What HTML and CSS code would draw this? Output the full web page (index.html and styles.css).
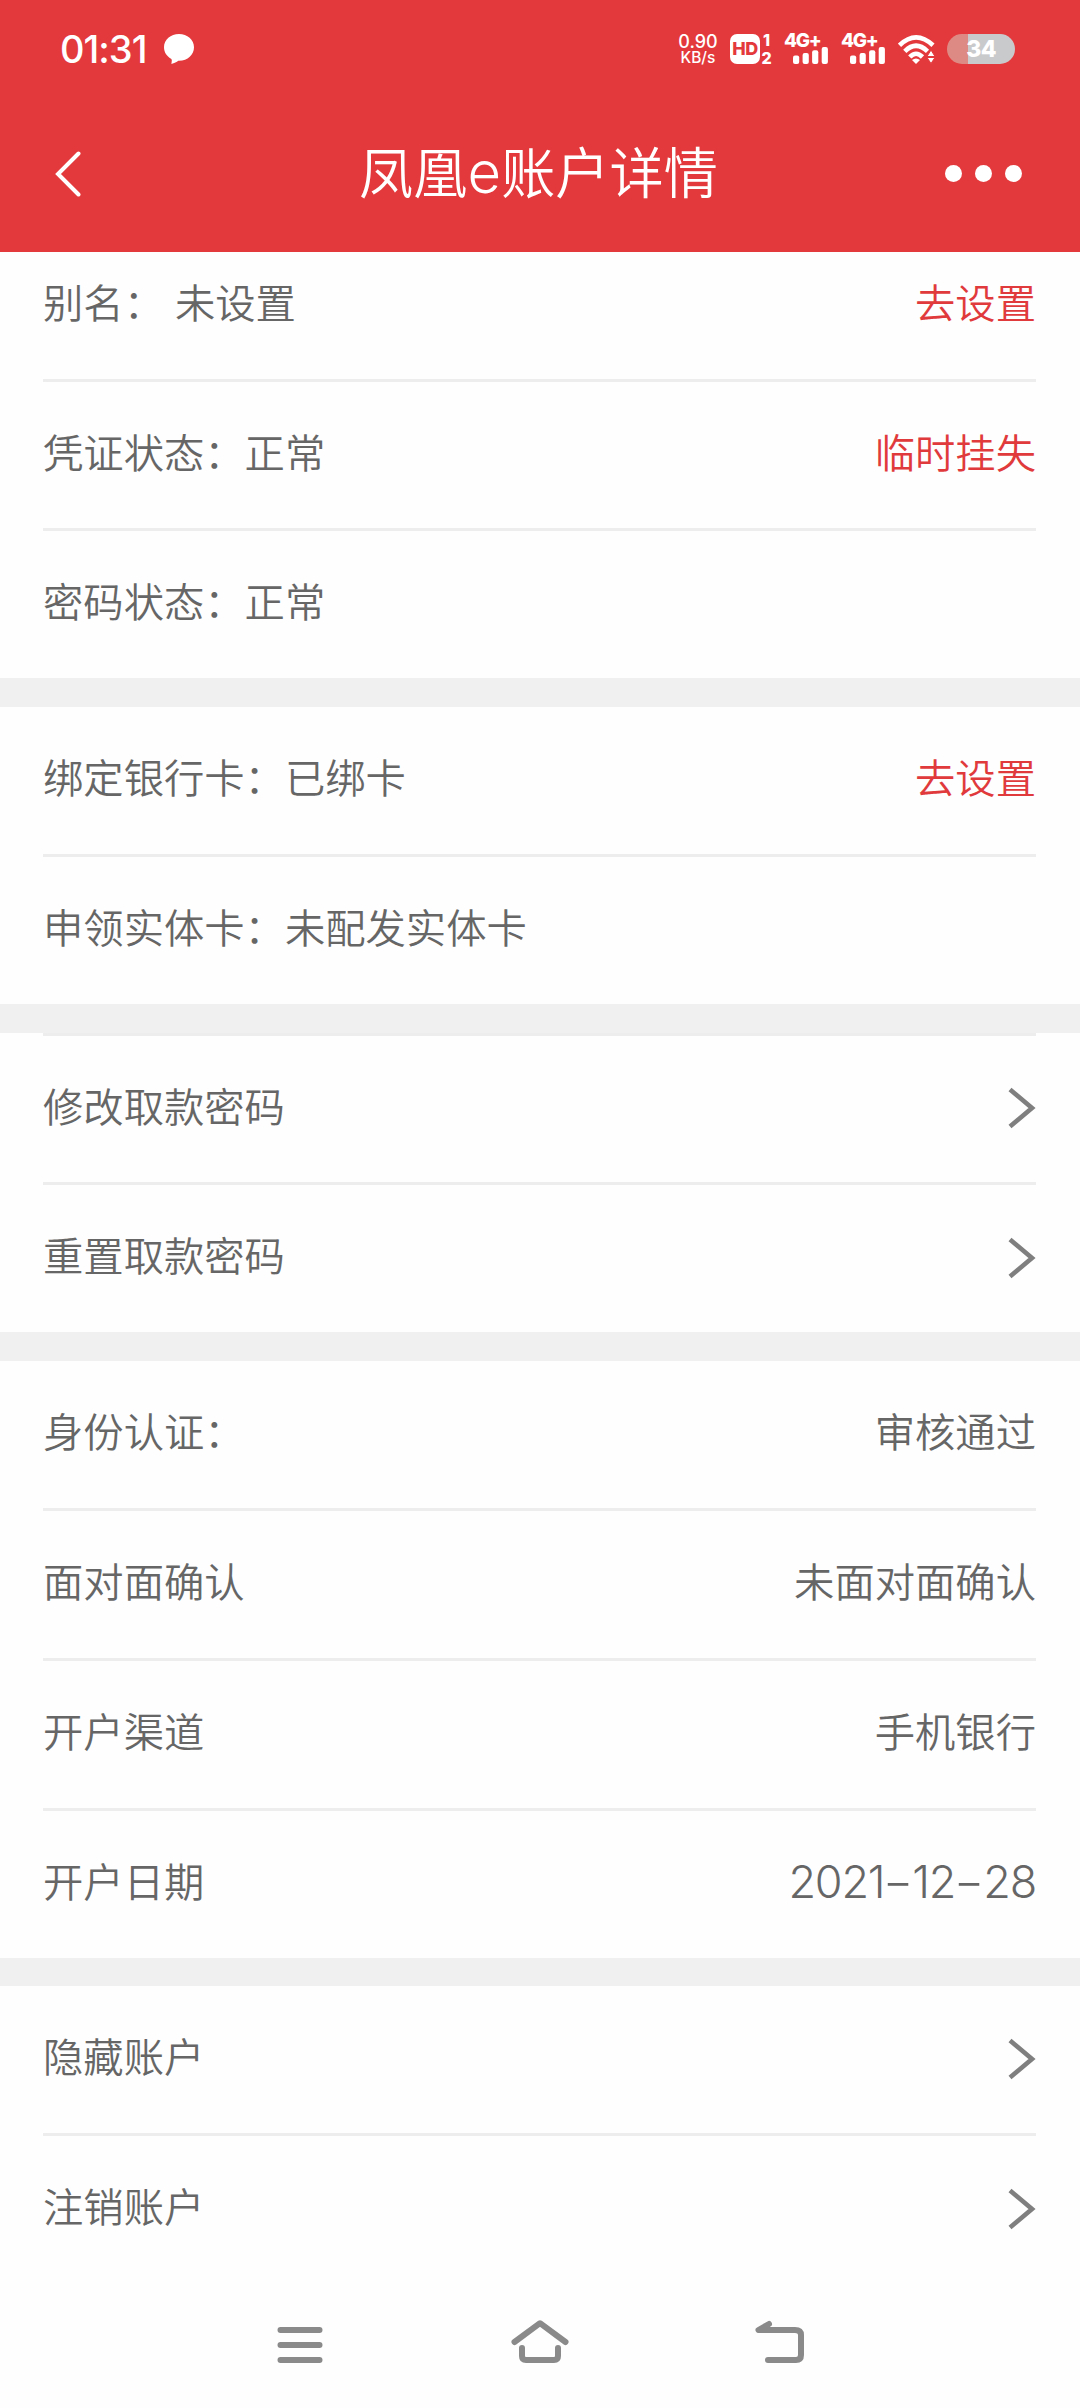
FILE: index.html
```html
<!DOCTYPE html>
<html lang="zh-CN">
<head>
<meta charset="utf-8">
<title>凤凰e账户详情</title>
<link rel="stylesheet" href="styles.css">
</head>
<body>
<svg class="defs" width="0" height="0" aria-hidden="true">
  <symbol id="chevron" viewBox="0 0 28 42"><path d="M2 2.500 L24 21 L2 39.500" fill="none" stroke="#7f7f7f" stroke-width="4.600"/></symbol>
  <symbol id="bars" viewBox="0 0 35 17">
    <rect x="0" y="8.500" width="6.200" height="8.500" rx="2"/><rect x="9.600" y="6" width="6.200" height="11" rx="2"/><rect x="19.100" y="3.200" width="6.200" height="13.800" rx="2"/><rect x="28.700" y="0" width="6.200" height="17" rx="2"/>
  </symbol>
</svg>
<header class="header">
  <div class="status">
    <span class="clock">01:31</span>
    <svg class="bubble" width="30" height="30" viewBox="0 0 30 30"><path fill="#fff" d="M15 0C6.700 0 0 5.800 0 13.300c0 5 2.800 8.900 7 11.400.8.700 1 1.500.7 2.800L7.400 30c3-.8 5.200-2 6.900-3.200C23.300 27.200 30 21 30 13.300 30 5.800 23.300 0 15 0z"/></svg>
    <div class="speed"><span class="rate">0.90</span><span class="unit">KB/s</span></div>
    <div class="hd"><span class="hd-box">HD</span><span class="sims"><span>1</span><span>2</span></span></div>
    <div class="signal"><span>4G+</span><svg width="35" height="17" fill="#fff"><use href="#bars"/></svg></div>
    <div class="signal"><span>4G+</span><svg width="35" height="17" fill="#fff"><use href="#bars"/></svg></div>
    <svg class="wifi" width="38" height="30" viewBox="0 0 38 30">
      <g fill="none" stroke="#fff" stroke-width="4.600"><path d="M1.500 11.300Q18 -4.500 35 11.300"/><path d="M6.800 17.300Q18 6.300 29.500 17.300"/><path d="M11.800 23Q18 16.500 24.500 23"/></g>
      <path fill="#fff" d="M14 26 Q18 23 22 26 L18 30z"/>
      <path fill="#fff" stroke="#e4393c" d="M29 22.500 L33 16 L37 22.500z M29 23.500 L37 23.500 L33 29.500z"/>
    </svg>
    <span class="battery">34</span>
  </div>
  <div class="titlebar">
    <svg class="back" width="26" height="46" viewBox="0 0 26 46"><path d="M23.500 2.500 L3 23 L23.500 43.500" fill="none" stroke="#fff" stroke-width="4" stroke-linecap="round"/></svg>
    <h1 class="title">凤凰<span class="latin">e</span>账户详情</h1>
    <div class="more"><i></i><i></i><i></i></div>
  </div>
</header>
<main class="content">
  <section class="group">
    <div class="row row-first"><span>别名：<span class="gap"> </span>未设置</span><a class="action">去设置</a></div>
    <div class="row"><span>凭证状态：正常</span><a class="action">临时挂失</a></div>
    <div class="row"><span>密码状态：正常</span></div>
  </section>
  <section class="group">
    <div class="row"><span>绑定银行卡：已绑卡</span><a class="action">去设置</a></div>
    <div class="row"><span>申领实体卡：未配发实体卡</span></div>
  </section>
  <section class="group group-lined">
    <div class="row"><span>修改取款密码</span><svg class="arrow"><use href="#chevron"/></svg></div>
    <div class="row"><span>重置取款密码</span><svg class="arrow"><use href="#chevron"/></svg></div>
  </section>
  <section class="group">
    <div class="row"><span>身份认证：</span><span>审核通过</span></div>
    <div class="row"><span>面对面确认</span><span>未面对面确认</span></div>
    <div class="row"><span>开户渠道</span><span>手机银行</span></div>
    <div class="row"><span>开户日期</span><span class="date">2021<span class="dash">-</span>12<span class="dash">-</span>28</span></div>
  </section>
  <section class="group group-last">
    <div class="row"><span>隐藏账户</span><svg class="arrow"><use href="#chevron"/></svg></div>
    <div class="row"><span>注销账户</span><svg class="arrow"><use href="#chevron"/></svg></div>
  </section>
</main>
<nav class="nav">
  <svg width="60" height="50" viewBox="0 0 60 50"><path d="M10.500 10H49.500M10.500 25H49.500M10.500 40H49.500"/></svg>
  <svg width="60" height="50" viewBox="0 0 60 50"><path d="M4.500 22 L30 3.200 L55.500 22M12 28V36Q12 40 16 40H44Q48 40 48 36V28"/></svg>
  <svg width="60" height="50" viewBox="0 0 60 50"><path d="M19 4 L8.500 10H45Q51 10 51 15V35Q51 40 46 40H18"/></svg>
</nav>
</body>
</html>
```

FILE: styles.css
```css
* { box-sizing: border-box; margin: 0; padding: 0; }
body {
  width: 1080px;
  height: 2408px;
  overflow: hidden;
  display: flex;
  flex-direction: column;
  background: #fefefe;
  color: #666;
  font-family: "Noto Sans CJK SC", sans-serif;
  font-weight: 350;
  font-size: 40.32px;
}
.defs { position: absolute; }
.header { height: 252px; background: #e4393c; color: #fff; }

.status {
  height: 98px;
  padding: 0 64px 0 60px;
  display: flex;
  align-items: center;
  font-family: Inter, sans-serif;
}
.clock { width: 104px; font-size: 38px; font-weight: 500; letter-spacing: -1px; white-space: nowrap; }
.bubble { margin-right: auto; }
.speed { width: 38px; margin-right: 13px; display: flex; flex-direction: column; align-items: center; font-weight: 500; }
.rate { font-size: 18px; line-height: 17px; }
.unit { font-size: 15.5px; line-height: 16px; }
.hd { display: flex; width: 43px; height: 30px; margin-right: 11px; }
.hd-box {
  width: 30px;
  border-radius: 7px;
  background: #fff;
  color: #e4393c;
  font-size: 18px;
  font-weight: 800;
  line-height: 30px;
  letter-spacing: -0.5px;
  text-align: center;
}
.sims { width: 13px; display: flex; flex-direction: column; justify-content: space-between; align-items: center; font-size: 16px; font-weight: 800; line-height: 12px; }
.signal { width: 44px; height: 30px; margin-right: 13px; display: flex; flex-direction: column; font-size: 19px; font-weight: 800; line-height: 13px; letter-spacing: -1.3px; white-space: nowrap; }
.signal svg { align-self: flex-end; }
.wifi { margin-right: 11px; }
.battery {
  width: 68px;
  height: 30px;
  margin-right: 1px;
  border-radius: 15px;
  background: linear-gradient(to right, #de8a84 21px, #c9cacc 21px);
  font-size: 23px;
  font-weight: 800;
  line-height: 30px;
  letter-spacing: -0.8px;
  text-align: center;
}
.status .speed { margin-left: -1px; }

.titlebar { height: 152px; padding: 0 58px 0 55px; display: flex; align-items: flex-start; justify-content: space-between; }
.back { margin: 53px 51px 0 0; }
.title { font-size: 54.2px; font-weight: 350; line-height: 80px; margin-top: 32px; white-space: nowrap; }
.latin { font-family: Inter, sans-serif; font-size: 58px; font-weight: 350; line-height: 1; }
.more { display: flex; gap: 13px; margin-top: 67px; }
.more i { width: 17px; height: 17px; border-radius: 50%; background: #fff; }

.group { padding: 0 44px 0 43px; }
.group + .group { border-top: 29px solid #f0f0f0; }
.group + .group-last { border-top-width: 28px; }
.row { height: 147px; display: flex; align-items: center; justify-content: space-between; line-height: 60px; white-space: nowrap; }
.row > span, .row > a { padding-bottom: 9px; }
.row + .row { height: 150px; border-top: 3px solid #ededed; }
.row-first { height: 127px; padding-bottom: 20px; }
.row-first + .row { height: 149px; }
.group-lined .row:first-child { height: 149px; border-top: 3px solid #ededed; }
.gap { margin-right: 2px; }
.action { color: #e13a3c; }
.arrow { width: 28px; height: 42px; margin-bottom: 2px; }
.row > .date { padding-bottom: 5px; font-family: Inter, sans-serif; font-size: 45px; font-weight: 350; letter-spacing: -1.2px; }
.dash { display: inline-block; width: 28px; text-align: center; letter-spacing: 0; transform: scaleX(1.5); }

.nav { flex: 1; padding: 0 270px 2px; display: flex; align-items: center; justify-content: space-between; }
.nav path { fill: none; stroke: #8a8a8a; stroke-width: 6; stroke-linecap: round; stroke-linejoin: round; }
```
